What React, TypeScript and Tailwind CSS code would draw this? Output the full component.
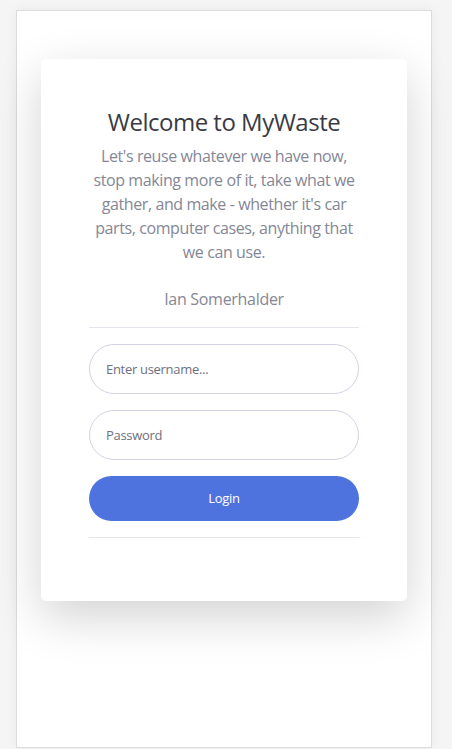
import React from 'react';

const App = () => {
	return (
		<div className="min-h-[749px] bg-[#f5f5f5] pl-4 pt-[10px] font-['Open_Sans','Noto_Sans',sans-serif]">
			<div className="h-[738px] w-[416px] border border-[#dcdcdc] bg-white px-6 pt-12 shadow-[0_0_12px_rgba(0,0,0,0.05)]">
				{/* Card */}
				<div className="rounded-[5px] bg-white px-12 pt-12 pb-[63px] shadow-[0_1rem_3rem_rgba(0,0,0,0.175)]">
					<div className="text-center">
						<h1 className="text-[24px] leading-[29px] tracking-[-0.5px] text-[#3a3b45]">Welcome to MyWaste</h1>
						<p className="mt-2 text-[16px] leading-6 tracking-[-0.4px] text-[#858796]">
							Let's reuse whatever we have now, stop making more of it, take what we gather, and make - whether it's car parts, computer cases, anything that we can use.
						</p>
						<p className="mt-[23px] text-[16px] leading-6 tracking-[-0.3px] text-[#858796]">Ian Somerhalder</p>
					</div>
					<hr className="mt-4 border-[#e3e6f0]" />
					<form className="mt-4 flex flex-col gap-4" onSubmit={(e) => e.preventDefault()}>
						<input
							type="text"
							placeholder="Enter username..."
							className="h-[50px] w-full rounded-full border border-[#d1d3e2] px-4 text-[13px] tracking-[-0.3px] text-[#6e707e] outline-none placeholder:text-[#6e707e]"
						/>
						<input
							type="password"
							placeholder="Password"
							className="h-[50px] w-full rounded-full border border-[#d1d3e2] px-4 text-[13px] tracking-[-0.3px] text-[#6e707e] outline-none placeholder:text-[#6e707e]"
						/>
						<button
							type="submit"
							className="h-[45px] w-full rounded-full bg-[#4e73df] text-[13px] tracking-[-0.3px] text-white"
						>
							Login
						</button>
					</form>
					<hr className="mt-4 border-[#e3e6f0]" />
				</div>
			</div>
		</div>
	);
};

export default App;
